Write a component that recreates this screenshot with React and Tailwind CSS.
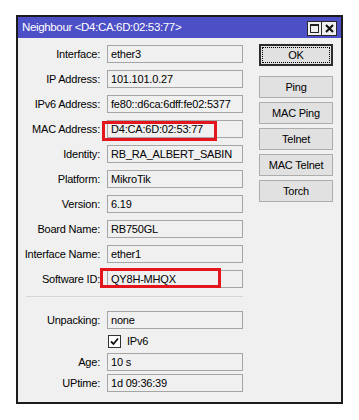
import React from 'react';

const topFields = [
    ['Interface:', 'ether3'],
    ['IP Address:', '101.101.0.27'],
    ['IPv6 Address:', 'fe80::d6ca:6dff:fe02:5377'],
    ['MAC Address:', 'D4:CA:6D:02:53:77'],
    ['Identity:', 'RB_RA_ALBERT_SABIN'],
    ['Platform:', 'MikroTik'],
    ['Version:', '6.19'],
    ['Board Name:', 'RB750GL'],
    ['Interface Name:', 'ether1'],
    ['Software ID:', 'QY8H-MHQX'],
];

const buttons = ['Ping', 'MAC Ping', 'Telnet', 'MAC Telnet', 'Torch'];

const Field = ({ label, value }) => (
    <div className="flex items-center gap-[7px] h-[18px]">
        <div className="w-[82px] text-right leading-[18px] whitespace-nowrap">{label}</div>
        <div className="w-[136px] h-[18px] border border-[#a5a5a5] bg-[#f0f0f0] pl-[3px] leading-[16px] whitespace-nowrap overflow-hidden">
            {value}
        </div>
    </div>
);

const App = () => {
    return (
        <div className="w-[359px] h-[420px] bg-white pt-[15px] pl-[16px]" style={{ fontFamily: '"Liberation Sans", Arial, sans-serif' }}>
            <div className="relative w-[327px] h-[389px] border-2 border-[#1c1c1c] bg-[#f0f0f0] flex flex-col text-[11px] tracking-[-0.2px] text-black">
                {/* Title bar */}
                <div className="h-[21px] bg-[#4c4fc6] flex items-center justify-between pl-[4px] pr-[4px]">
                    <span className="text-white text-[11.5px] tracking-[-0.35px] leading-[21px] whitespace-nowrap">Neighbour &lt;D4:CA:6D:02:53:77&gt;</span>
                    <div className="flex mt-[1px]">
                        <div className="w-[15px] h-[15px] bg-[#f0f0f0] border border-[#2a2a2a] flex items-center justify-center">
                            <div className="w-[9px] h-[9px] border border-[#222] border-t-2"></div>
                        </div>
                        <div className="w-[15px] h-[15px] bg-[#f0f0f0] border border-[#2a2a2a] border-l-0 flex items-center justify-center">
                            <svg width="9" height="9" viewBox="0 0 9 9">
                                <path d="M1 1 L8 8 M8 1 L1 8" stroke="#111" strokeWidth="2" />
                            </svg>
                        </div>
                    </div>
                </div>

                {/* Body */}
                <div className="flex pt-[7px]">
                    <div className="flex flex-col">
                        <div className="flex flex-col gap-[7px]">
                            {topFields.map(([l, v]) => (
                                <Field key={l} label={l} value={v} />
                            ))}
                        </div>
                        <div className="ml-[8px] mt-[8px] w-[217px] h-px bg-[#d5d5d5]"></div>
                        <div className="flex flex-col gap-[3px] mt-[14px]">
                            <Field label="Unpacking:" value="none" />
                            <div className="flex items-center h-[18px] pl-[90px] gap-[6px]">
                                <div className="w-[13px] h-[13px] bg-white border border-[#333] flex items-center justify-center">
                                    <svg width="9" height="9" viewBox="0 0 9 9">
                                        <path d="M1 4.5 L3.5 7 L8 1.5" fill="none" stroke="#111" strokeWidth="1.8" />
                                    </svg>
                                </div>
                                <span className="leading-[18px]">IPv6</span>
                            </div>
                            <Field label="Age:" value="10 s" />
                            <Field label="UPtime:" value="1d 09:36:39" />
                        </div>
                    </div>

                    {/* Buttons */}
                    <div className="flex flex-col ml-[16px] w-[74px] -mt-px">
                        <div className="h-[22px] border-2 border-[#2b2b2b] bg-[#e1e1e1] p-px">
                            <div className="h-full border border-dotted border-black flex items-center justify-center">OK</div>
                        </div>
                        <div className="flex flex-col gap-[4px] mt-[10px]">
                            {buttons.map((b) => (
                                <div key={b} className="h-[22px] border border-[#adadad] bg-[#e1e1e1] flex items-center justify-center whitespace-nowrap">
                                    {b}
                                </div>
                            ))}
                        </div>
                    </div>
                </div>

                {/* Highlight marks */}
                <div className="absolute left-[84px] top-[104px] w-[115px] h-[20px] border-[3px] border-[#e3151d]"></div>
                <div className="absolute left-[82px] top-[251px] w-[121px] h-[20px] border-[3px] border-[#e3151d]"></div>
            </div>
        </div>
    );
};

export default App;
